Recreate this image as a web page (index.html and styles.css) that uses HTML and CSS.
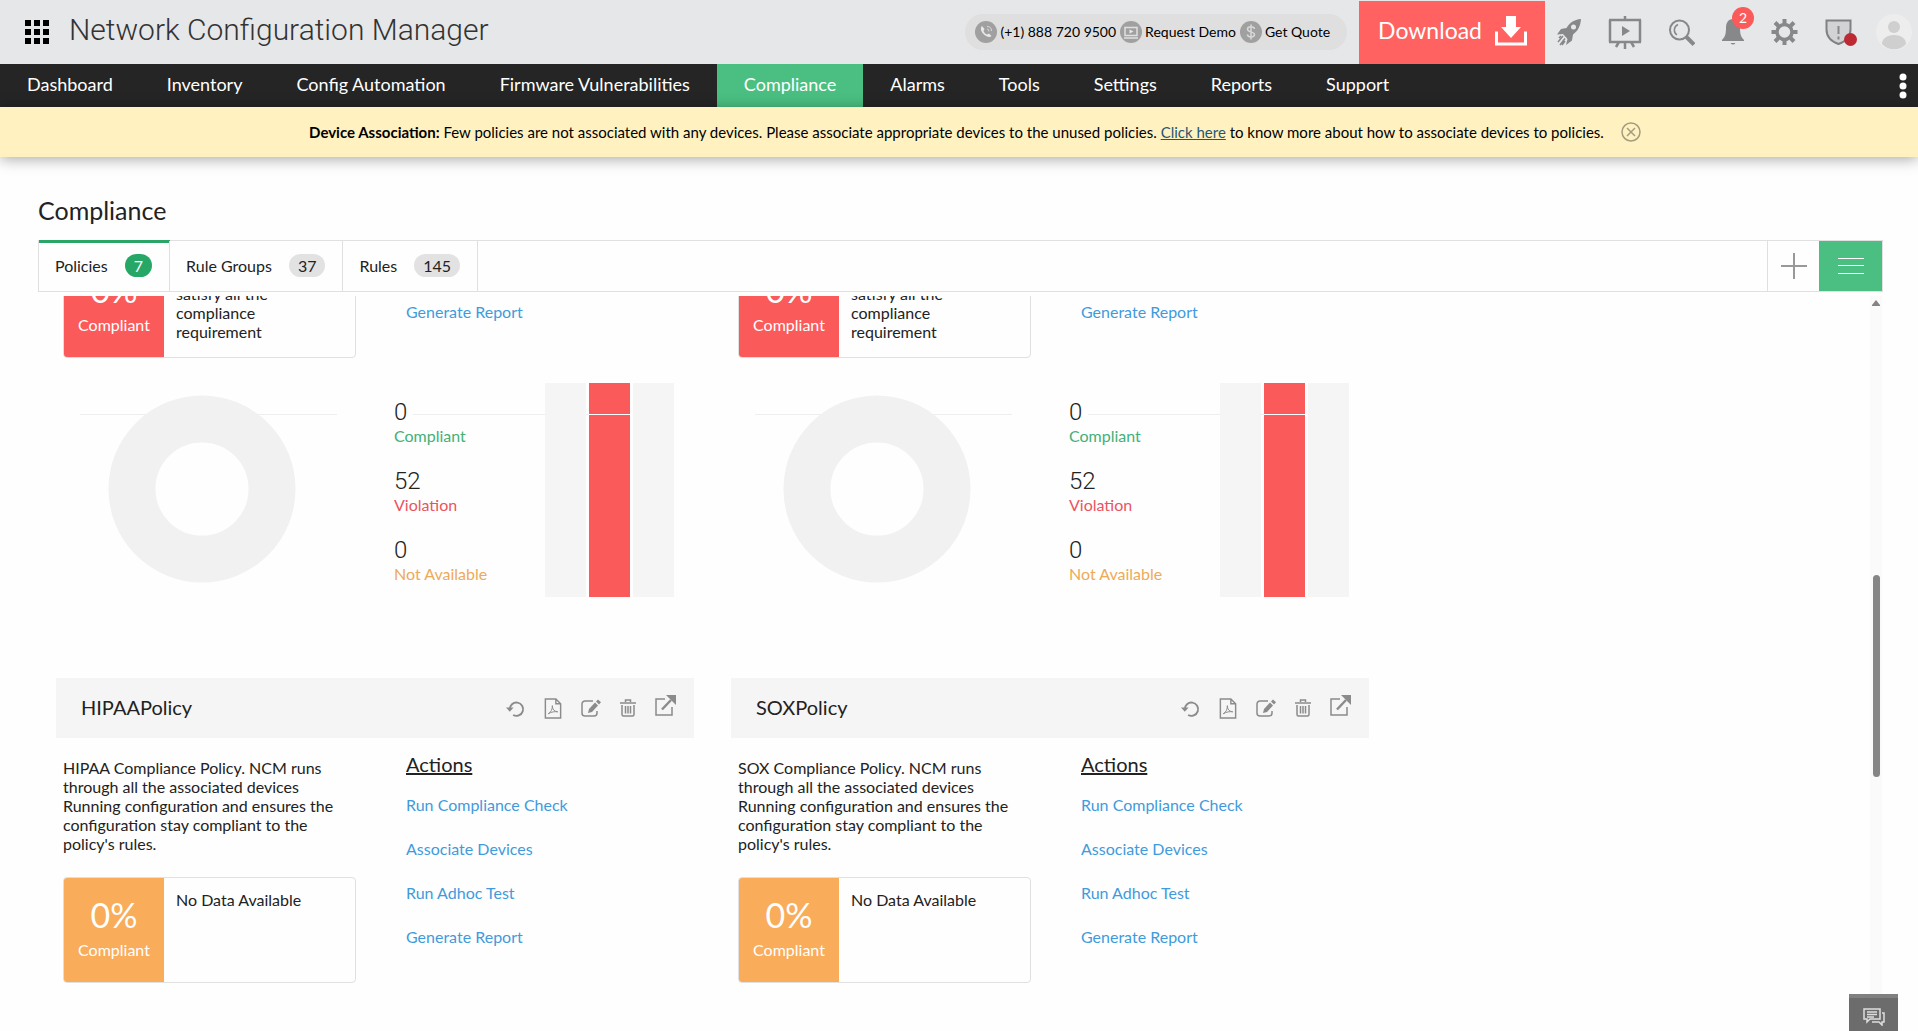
FILE: index.html
```html
<!DOCTYPE html>
<html lang="en">
<head>
    <meta charset="UTF-8">
    <meta name="viewport" content="width=device-width, initial-scale=1.0">
    <title>Network Configuration Manager</title>
    <link rel="stylesheet" href="styles.css">
</head>
<body>
    <!-- icons used more than once -->
    <svg class="defs" width="0" height="0" aria-hidden="true">
        <symbol id="i-refresh" viewBox="0 0 20 20">
            <path d="M4 11a7 7 0 1 1 3.5 5.8" fill="none" stroke="currentColor" stroke-width="2"/>
            <path d="M0 9h8l-4 4.500z" fill="currentColor"/>
        </symbol>
        <symbol id="i-pdf" viewBox="0 0 18 22">
            <path d="M1 1h11l5 5v15H1zM12 1v5h5" fill="none" stroke="currentColor" stroke-width="1.500"/>
            <path d="M4 16.500c3-1.500 4.500-5 4.300-8.500 0 4 2 6 5.700 6.500-3.500-.5-6.500 0-10 2z" fill="none" stroke="currentColor"/>
        </symbol>
        <symbol id="i-edit" viewBox="0 0 20 18">
            <path d="M12 2H4a3 3 0 0 0-3 3v9a3 3 0 0 0 3 3h9a3 3 0 0 0 3-3v-2" fill="none" stroke="currentColor" stroke-width="1.500"/>
            <path d="M7 14l1-4 6-6.500 3 3L11 13z" fill="currentColor"/>
            <path d="M15 2.500L17 .500l3 2.800-2 2.200z" fill="currentColor"/>
        </symbol>
        <symbol id="i-trash" viewBox="0 0 16 18">
            <path d="M5.500 3V1h5v2M0 4h16M2 6v9.500q0 1.500 1.500 1.500h9q1.500 0 1.500-1.500V6M5.500 7v7.500M8 7v7.500M10.500 7v7.500" fill="none" stroke="currentColor" stroke-width="1.500"/>
        </symbol>
        <symbol id="i-open" viewBox="0 0 21 21">
            <path d="M10 4H1v16h16v-8" fill="none" stroke="currentColor" stroke-width="1.500"/>
            <path d="M7 14.500L16 5" stroke="currentColor" stroke-width="2.500"/>
            <path d="M11 0h10v10z" fill="currentColor"/>
        </symbol>
    </svg>

    <header class="topbar">
        <button class="apps" aria-label="Apps">
            <svg width="24" height="24" viewBox="0 0 24 24"><path d="M0 0h6v6H0zM9 0h6v6H9zM18 0h6v6h-6zM0 9h6v6H0zM9 9h6v6H9zM18 9h6v6h-6zM0 18h6v6H0zM9 18h6v6H9zM18 18h6v6h-6z"/></svg>
        </button>
        <h1 class="product">Network Configuration Manager</h1>
        <div class="contact">
            <a href="#">
                <svg width="22" height="22" viewBox="0 0 22 22"><circle cx="11" cy="11" r="11" fill="#a0a0a0"/><path d="M7 5c-2 2-1 5.500 1.500 8s6 4 8 2l-2.500-2.500-2 1c-1.500-.5-3-2-3.500-3.500l1-2z" fill="#e8e8e8"/><path d="M12 8q2 0 2 2.500M12 5.500q4.500 0 4.500 4.500" fill="none" stroke="#d8d8d8"/></svg>
                <span>(+1) 888 720 9500</span>
            </a>
            <a href="#">
                <svg width="22" height="22" viewBox="0 0 22 22"><circle cx="11" cy="11" r="11" fill="#a0a0a0"/><path d="M5 6.500h12v8H5zM4 17h14" fill="none" stroke="#e0e0e0" stroke-width="1.500"/><path d="M9.500 8.500l4 2-4 2z" fill="#e8e8e8"/></svg>
                <span>Request Demo</span>
            </a>
            <a href="#">
                <svg width="22" height="22" viewBox="0 0 22 22"><circle cx="11" cy="11" r="11" fill="#a0a0a0"/><path d="M14.500 8c-.5-3-7-3-7 .3 0 3.200 7 2 7 5.200s-6.500 3.300-7.200 0M11 3.500v15" fill="none" stroke="#d8d8d8" stroke-width="1.500"/></svg>
                <span>Get Quote</span>
            </a>
        </div>
        <a class="download" href="#">
            <span>Download</span>
            <svg width="32" height="30" viewBox="0 0 32 30"><path d="M11 0h10v11h5l-10 11L6 11h5z" fill="#fff"/><path d="M1.500 15.500v12.500h29V15.500" fill="none" stroke="#fff" stroke-width="3"/></svg>
        </a>
        <div class="tools">
            <button aria-label="Getting started">
                <svg width="24" height="28" viewBox="0 0 24 28"><path d="M24 1c-7 .5-11.500 4-14.500 9L4 11l-4 5.500 6-.5 4.500 5L9 27l6-4.500 1-6C21 13 23.500 8 24 1z" fill="#87888a"/><circle cx="16.500" cy="9" r="2.500" fill="#e6e7e9"/><path d="M6 18l-5 6M8 20.500l-5 6.500M5 27l3-4M2 20l2-2" stroke="#87888a" stroke-width="1.500"/></svg>
            </button>
            <button aria-label="Presentation">
                <svg width="34" height="34" viewBox="0 0 34 34"><path d="M1 5h32M1 27h32M2 5v22M32 5v22M17 1v4M17 27v7M11 27l-3 5M23 27l3 5" fill="none" stroke="#87888a" stroke-width="2.500"/><path d="M14 11l8 5-8 5z" fill="#87888a"/></svg>
            </button>
            <button aria-label="Search">
                <svg width="26" height="27" viewBox="0 0 26 27"><circle cx="10.500" cy="11" r="9.500" fill="none" stroke="#87888a" stroke-width="2"/><path d="M9 5.500a6 6 0 0 0-1 10.500" fill="none" stroke="#87888a" stroke-width="1.500"/><path d="M17 17.500l8 8" stroke="#87888a" stroke-width="4"/></svg>
            </button>
            <button class="bell" aria-label="Notifications">
                <svg width="22" height="26" viewBox="0 0 22 26"><path d="M11 0c-5 0-7 4-7 9 0 6-1 9-4 12v1h22v-1c-3-3-4-6-4-12 0-5-2-9-7-9zM8.500 24h5q-2.500 3-5 0z" fill="#87888a"/></svg>
                <span class="count">2</span>
            </button>
            <button aria-label="Settings">
                <svg width="27" height="26" viewBox="-13 -13 26 26"><circle r="7.500" fill="none" stroke="#87888a" stroke-width="3.500"/><path d="M0-8v-5M0 8v5M-8 0h-5M8 0h5M-6-6l-3.500-3.500M6 6l3.500 3.500M-6 6l-3.500 3.500M6-6l3.500-3.500" stroke="#87888a" stroke-width="4"/></svg>
            </button>
            <button class="shield" aria-label="Security status">
                <svg width="32" height="28" viewBox="0 0 32 28"><path d="M1.500 2.500h24v9c0 7-5 12-12 14.500-7-2.500-12-7.500-12-14.500z" fill="#d2d3d5" stroke="#808183" stroke-width="2"/><path d="M13.500 8v8M13.500 18.500v3" stroke="#87888a" stroke-width="2"/><circle cx="25.500" cy="21.500" r="6.500" fill="#bd2a33"/></svg>
            </button>
            <button class="profile" aria-label="Profile">
                <svg width="36" height="36" viewBox="0 0 36 36"><circle cx="18" cy="18" r="18" fill="#ededee"/><circle cx="18" cy="13" r="6" fill="#cfcfcf"/><path d="M6 30c0-12 24-12 24 0-6 7-18 7-24 0z" fill="#cfcfcf"/></svg>
            </button>
        </div>
    </header>

    <nav class="nav">
        <a href="#">Dashboard</a>
        <a href="#">Inventory</a>
        <a href="#">Config Automation</a>
        <a href="#">Firmware Vulnerabilities</a>
        <a href="#" class="active">Compliance</a>
        <a href="#">Alarms</a>
        <a href="#">Tools</a>
        <a href="#">Settings</a>
        <a href="#">Reports</a>
        <a href="#">Support</a>
        <button class="more" aria-label="More">
            <svg width="8" height="26" viewBox="0 0 8 26"><g fill="#fff"><circle cx="4" cy="4" r="3.500"/><circle cx="4" cy="13" r="3.500"/><circle cx="4" cy="22" r="3.500"/></g></svg>
        </button>
    </nav>

    <div class="notice">
        <p><b>Device Association:</b> Few policies are not associated with any devices. Please associate appropriate devices to the unused policies. <a href="#">Click here</a> to know more about how to associate devices to policies.</p>
        <button aria-label="Close">
            <svg width="20" height="20" viewBox="0 0 20 20"><circle cx="10" cy="10" r="9" fill="none" stroke="#a39c7f" stroke-width="1.500"/><path d="M6 6l8 8M14 6l-8 8" stroke="#a39c7f" stroke-width="1.500"/></svg>
        </button>
    </div>

    <main class="page">
        <h2 class="page-title">Compliance</h2>
        <div class="tabs">
            <button class="tab selected">Policies <span>7</span></button>
            <button class="tab">Rule Groups <span>37</span></button>
            <button class="tab">Rules <span>145</span></button>
            <button class="add" aria-label="Add">
                <svg width="26" height="26" viewBox="0 0 26 26"><path d="M13 0v26M0 13h26" stroke="#999" stroke-width="2"/></svg>
            </button>
            <button class="menu" aria-label="Menu">
                <svg width="26" height="18" viewBox="0 0 26 18"><path d="M0 1.500h26M0 8.500h26M0 16.500h26" stroke="#fff"/></svg>
            </button>
        </div>

        <div class="scroller">
            <div class="cards">
                <section class="card">
                    <div class="card-body scrolled">
                        <div class="result">
                            <div class="score red"><strong>0%</strong><span>Compliant</span></div>
                            <p>satisfy all the compliance requirement</p>
                        </div>
                        <div class="actions"><a href="#">Generate Report</a></div>
                    </div>
                    <div class="charts">
                        <div class="pie"><svg width="188" height="188" viewBox="0 0 188 188"><circle cx="94" cy="94" r="70" fill="none" stroke="#f1f1f1" stroke-width="47"/></svg></div>
                        <dl class="stats">
                            <div class="ok"><dd>0</dd><dt>Compliant</dt></div>
                            <div class="bad"><dd>52</dd><dt>Violation</dt></div>
                            <div class="na"><dd>0</dd><dt>Not Available</dt></div>
                        </dl>
                        <div class="bars"><i></i><i class="full"></i><i></i></div>
                    </div>
                </section>
                <section class="card">
                    <div class="card-body scrolled">
                        <div class="result">
                            <div class="score red"><strong>0%</strong><span>Compliant</span></div>
                            <p>satisfy all the compliance requirement</p>
                        </div>
                        <div class="actions"><a href="#">Generate Report</a></div>
                    </div>
                    <div class="charts">
                        <div class="pie"><svg width="188" height="188" viewBox="0 0 188 188"><circle cx="94" cy="94" r="70" fill="none" stroke="#f1f1f1" stroke-width="47"/></svg></div>
                        <dl class="stats">
                            <div class="ok"><dd>0</dd><dt>Compliant</dt></div>
                            <div class="bad"><dd>52</dd><dt>Violation</dt></div>
                            <div class="na"><dd>0</dd><dt>Not Available</dt></div>
                        </dl>
                        <div class="bars"><i></i><i class="full"></i><i></i></div>
                    </div>
                </section>
                <section class="card">
                    <div class="card-head">
                        <h3>HIPAAPolicy</h3>
                        <div class="card-tools">
                            <button aria-label="Refresh"><svg width="19" height="19"><use href="#i-refresh"/></svg></button>
                            <button aria-label="Export PDF"><svg width="18" height="21"><use href="#i-pdf"/></svg></button>
                            <button aria-label="Edit"><svg width="20" height="18"><use href="#i-edit"/></svg></button>
                            <button aria-label="Delete"><svg width="16" height="18"><use href="#i-trash"/></svg></button>
                            <button class="open" aria-label="Open"><svg width="21" height="21"><use href="#i-open"/></svg></button>
                        </div>
                    </div>
                    <div class="card-body">
                        <div class="info">
                            <p class="desc">HIPAA Compliance Policy. NCM runs through all the associated devices Running configuration and ensures the configuration stay compliant to the policy's rules.</p>
                            <div class="result">
                                <div class="score orange"><strong>0%</strong><span>Compliant</span></div>
                                <p>No Data Available</p>
                            </div>
                        </div>
                        <div class="actions">
                            <h4>Actions</h4>
                            <a href="#">Run Compliance Check</a>
                            <a href="#">Associate Devices</a>
                            <a href="#">Run Adhoc Test</a>
                            <a href="#">Generate Report</a>
                        </div>
                    </div>
                </section>
                <section class="card">
                    <div class="card-head">
                        <h3>SOXPolicy</h3>
                        <div class="card-tools">
                            <button aria-label="Refresh"><svg width="19" height="19"><use href="#i-refresh"/></svg></button>
                            <button aria-label="Export PDF"><svg width="18" height="21"><use href="#i-pdf"/></svg></button>
                            <button aria-label="Edit"><svg width="20" height="18"><use href="#i-edit"/></svg></button>
                            <button aria-label="Delete"><svg width="16" height="18"><use href="#i-trash"/></svg></button>
                            <button class="open" aria-label="Open"><svg width="21" height="21"><use href="#i-open"/></svg></button>
                        </div>
                    </div>
                    <div class="card-body">
                        <div class="info">
                            <p class="desc">SOX Compliance Policy. NCM runs through all the associated devices Running configuration and ensures the configuration stay compliant to the policy's rules.</p>
                            <div class="result">
                                <div class="score orange"><strong>0%</strong><span>Compliant</span></div>
                                <p>No Data Available</p>
                            </div>
                        </div>
                        <div class="actions">
                            <h4>Actions</h4>
                            <a href="#">Run Compliance Check</a>
                            <a href="#">Associate Devices</a>
                            <a href="#">Run Adhoc Test</a>
                            <a href="#">Generate Report</a>
                        </div>
                    </div>
                </section>
            </div>
            <div class="scrollbar">
                <svg width="8" height="6" viewBox="0 0 8 6"><path d="M4 0l4 5v1H0V5z" fill="#858585"/></svg>
                <div class="thumb"></div>
            </div>
        </div>
    </main>

    <button class="chat" aria-label="Chat">
        <svg width="22" height="18" viewBox="0 0 22 18" fill="none" stroke="#ddd" stroke-width="1.500"><path d="M1 1h16v10H7l-3 3v-3H1zM4 4h10M4 6.500h10M4 9h7M19 5h2v9h-2v3l-3-3H9"/></svg>
    </button>
</body>
</html>
```

FILE: styles.css
```css
* {
    margin: 0;
    padding: 0;
    box-sizing: border-box;
}

body {
    height: 100vh;
    display: flex;
    flex-direction: column;
    overflow: hidden;
    background: #fefefe;
    color: #222;
    font-family: Lato, "Liberation Sans", sans-serif;
    font-size: 16px;
}

button {
    border: none;
    background: none;
    font: inherit;
    color: inherit;
    cursor: pointer;
}

a {
    text-decoration: none;
    color: inherit;
}

svg {
    display: block;
}

.defs {
    position: absolute;
}

/* top bar */
.topbar {
    display: flex;
    align-items: center;
    flex: none;
    height: 64px;
    padding: 0 6px 0 25px;
    background: #e6e7e9;
}

.product {
    margin: 0 auto 0 20px;
    padding-bottom: 5px;
    color: #333;
    font-family: "Roboto Slab", Roboto, sans-serif;
    font-size: 30px;
    font-weight: 300;
    white-space: nowrap;
}

.contact {
    display: flex;
    align-items: center;
    gap: 4px;
    height: 36px;
    padding: 0 17px 0 10px;
    margin-right: 12px;
    border-radius: 18px;
    background: #dfdfdf;
    color: #000;
    font-size: 14px;
    white-space: nowrap;
}

.contact a {
    display: flex;
    align-items: center;
    gap: 3px;
}

.contact span {
    padding-bottom: 2px;
}

.download {
    display: flex;
    align-items: center;
    align-self: stretch;
    gap: 13px;
    margin-top: 1px;
    padding: 0 18px 4px 19px;
    background: #ff6260;
    color: #fff;
    font-size: 23px;
}

.download span {
    padding-bottom: 2px;
}

.tools {
    display: flex;
    align-items: center;
    gap: 27px;
    margin-left: 12px;
}

.profile {
    margin-left: -8px;
}

.bell {
    position: relative;
}

.count {
    position: absolute;
    left: 10px;
    top: -12px;
    width: 22px;
    height: 22px;
    border-radius: 50%;
    background: #fb5a5a;
    color: #fff;
    font-size: 14px;
    line-height: 22px;
}

/* main navigation */
.nav {
    display: flex;
    flex: none;
    height: 43px;
    background: #252525;
    color: #fff;
    font-size: 18px;
    line-height: 40px;
}

.nav a {
    padding: 0 27px;
    white-space: nowrap;
}

.nav .active {
    background: #4abf81;
}

.more {
    margin: 0 11px 0 auto;
}

.notice {
    display: flex;
    align-items: center;
    justify-content: center;
    gap: 17px;
    flex: none;
    height: 50px;
    padding-left: 32px;
    background: #fff2c0;
    color: #000;
    font-size: 15px;
    box-shadow: 0 2px 14px rgba(0, 0, 0, 0.35);
}

.notice a {
    color: #1f5673;
    text-decoration: underline;
}

/* page */
.page {
    flex: 1;
    min-height: 0;
    display: flex;
    flex-direction: column;
    padding: 36px 36px 0 38px;
}

.page-title {
    margin-bottom: 12px;
    font-size: 25px;
    font-weight: 400;
    line-height: 35px;
}

.tabs {
    display: flex;
    flex: none;
    height: 52px;
    border: 1px solid #e0e0e0;
    margin-right: -1px;
}

.tab {
    display: flex;
    align-items: center;
    gap: 17px;
    padding: 0 17px 1px 16px;
    border-right: 1px solid #e0e0e0;
}

.tab span {
    padding: 0 9px;
    border-radius: 12px;
    background: #e2e2e2;
    line-height: 23px;
}

.selected {
    box-shadow: 0 -1px #2ba567, inset 0 2px #2ba567;
}

.selected span {
    background: #27a765;
    color: #fff;
}

.add {
    display: flex;
    align-items: center;
    justify-content: center;
    width: 52px;
    margin-left: auto;
    border-left: 1px solid #e0e0e0;
}

.menu {
    display: flex;
    align-items: center;
    justify-content: center;
    width: 63px;
    background: #4abf81;
}

.scroller {
    display: flex;
    flex: 1;
    min-height: 0;
    margin-top: 4px;
    overflow: hidden;
}

.cards {
    flex: 1;
    display: grid;
    grid-template-columns: repeat(auto-fill, 638px);
    gap: 72px 37px;
    align-content: start;
    padding-left: 18px;
}

.card-head {
    display: flex;
    align-items: center;
    justify-content: space-between;
    height: 60px;
    padding: 0 18px 0 25px;
    background: #f5f5f5;
}

.card-head h3 {
    padding-bottom: 3px;
    font-size: 20px;
    font-weight: 400;
}

.card-tools {
    display: flex;
    align-items: center;
    gap: 19px;
    color: #8b8b8b;
}

.open {
    padding-bottom: 5px;
}

.card-body {
    display: grid;
    grid-template-columns: 343px 1fr;
    padding-left: 7px;
}

.desc {
    width: 280px;
    margin: 20px 0 24px;
    line-height: 19px;
}

.result {
    display: flex;
    width: 293px;
    height: 106px;
    border: 1px solid #e0e0e0;
    border-radius: 4px;
    overflow: hidden;
}

.result p {
    flex: 1;
    padding: 12px 30px 0 12px;
    line-height: 19px;
}

.score {
    display: flex;
    flex-direction: column;
    align-items: center;
    gap: 6px;
    width: 100px;
    padding-top: 18px;
    color: #fff;
}

.score strong {
    font-size: 34px;
    font-weight: 400;
    line-height: 38px;
}

.red {
    background: #fb5a5a;
}

.orange {
    background: #f9ac59;
}

.actions {
    display: flex;
    flex-direction: column;
    color: #3f9bdc;
}

.actions h4 {
    margin: 14px 0 7px;
    color: #222;
    font-size: 20px;
    font-weight: 400;
    line-height: 24px;
    text-decoration: underline;
}

.actions a {
    line-height: 44px;
}

/* first row, partly above the scroller's top edge */
.scrolled {
    margin-top: -44px;
}

.scrolled .actions {
    padding-top: 38px;
}

.scrolled p {
    padding-top: 31px;
}

.charts {
    display: grid;
    grid-template-columns: 257px 151px 130px;
    margin-top: 25px;
    padding-left: 24px;
    /* axis line runs behind the donut */
    background: linear-gradient(#eee, #eee) 24px 31px / 257px 1px no-repeat, linear-gradient(#eee, #eee) 357px 31px / 217px 1px no-repeat;
}

.pie {
    padding: 12px 0 0 28px;
}

.stats {
    padding: 16px 0 0 57px;
    white-space: nowrap;
}

.stats div {
    height: 69px;
}

.stats dd {
    font-family: "Roboto Slab", Roboto, sans-serif;
    font-size: 24px;
    font-weight: 300;
    line-height: 26px;
}

.stats dt {
    line-height: 22px;
}

.ok dt {
    color: #43b077;
}

.bad dt {
    color: #ea5460;
}

.na dt {
    color: #edaa59;
}

.bars {
    display: flex;
    gap: 3px;
    height: 214px;
    margin-left: 57px;
}

.bars i {
    flex: none;
    width: 41px;
    background: #f5f5f5;
}

.bars .full {
    background: linear-gradient(#fff, #fff) 0 31px / 100% 1px no-repeat #fb5a5a;
}

.scrollbar {
    display: flex;
    flex-direction: column;
    align-items: center;
    width: 12px;
    padding-top: 4px;
    background: #fafafa;
}

.thumb {
    width: 7px;
    height: 202px;
    margin-top: 269px;
    border-radius: 4px;
    background: #858585;
}

.chat {
    position: fixed;
    right: 20px;
    bottom: 0;
    display: flex;
    justify-content: center;
    width: 49px;
    height: 37px;
    padding-top: 10px;
    border-top: 4px solid #808080;
    background: #6c6c6c;
}
```
